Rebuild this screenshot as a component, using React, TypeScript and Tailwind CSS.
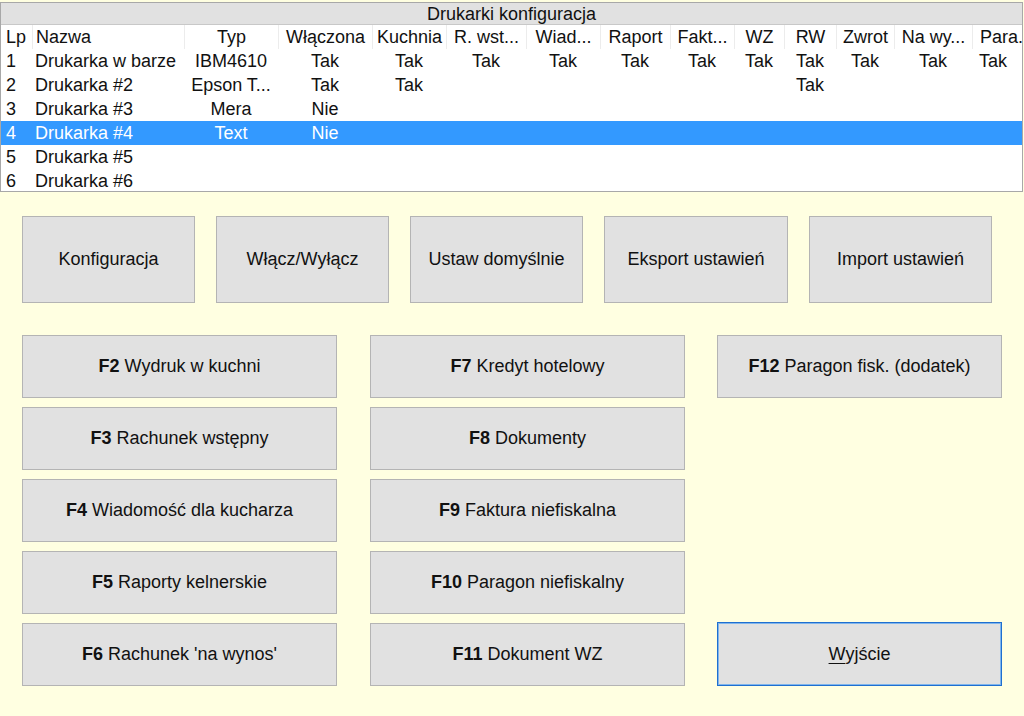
const cols = [31, 152, 94, 94, 74, 80, 74, 70, 64, 50, 52, 58, 78, 51];

const headers = ["Lp", "Nazwa", "Typ", "Włączona", "Kuchnia", "R. wst...", "Wiad...", "Raport", "Fakt...", "WZ", "RW", "Zwrot", "Na wy...", "Para."];

const rows: string[][] = [
  ["1", "Drukarka w barze", "IBM4610", "Tak", "Tak", "Tak", "Tak", "Tak", "Tak", "Tak", "Tak", "Tak", "Tak", "Tak"],
  ["2", "Drukarka #2", "Epson T...", "Tak", "Tak", "", "", "", "", "", "Tak", "", "", ""],
  ["3", "Drukarka #3", "Mera", "Nie", "", "", "", "", "", "", "", "", "", ""],
  ["4", "Drukarka #4", "Text", "Nie", "", "", "", "", "", "", "", "", "", ""],
  ["5", "Drukarka #5", "", "", "", "", "", "", "", "", "", "", "", ""],
  ["6", "Drukarka #6", "", "", "", "", "", "", "", "", "", "", "", ""],
];

function Cell({ i, text, header }: { i: number; text: string; header?: boolean }) {
  const align = i === 0 ? "justify-start pl-[5px]" : i === 1 ? "justify-start pl-[3px]" : i === 13 ? "justify-start pl-[7px]" : "justify-center";
  return (
    <div
      style={{ width: cols[i] }}
      className={`flex items-center shrink-0 overflow-hidden whitespace-nowrap ${align} ${header && i > 0 ? "border-l border-[#ececec]" : ""}`}
    >
      {text}
    </div>
  );
}

function Btn({ k, label, className = "" }: { k?: string; label: string; className?: string }) {
  return (
    <div className={`flex items-center justify-center bg-[#e1e1e1] border border-[#b4b4b4] text-[18px] text-[#111] ${className}`}>
      {k && <span className="font-bold mr-[5px]">{k}</span>}
      {label}
    </div>
  );
}

export default function App() {
  return (
    <div
      className="w-[1024px] h-[716px] bg-[#ffffe1] overflow-hidden text-[18px] text-[#111]"
      style={{ fontFamily: '"Liberation Sans", Arial, sans-serif' }}
    >
      <div className="pt-[2px]">
        <div className="w-[1023px] border border-[#a8a8a8] bg-white">
          <div className="h-[22px] bg-[#e1e1e1] border-b border-[#c8c8c8] flex items-center justify-center leading-none">
            Drukarki konfiguracja
          </div>
          <div className="h-[166px] overflow-hidden">
            <div className="flex h-[24px] leading-none">
              {headers.map((h, i) => (
                <Cell key={i} i={i} text={h} header />
              ))}
            </div>
            {rows.map((r, ri) => (
              <div
                key={ri}
                className={`flex h-[24px] leading-none ${ri === 3 ? "bg-[#3399ff] text-white" : ""}`}
              >
                {r.map((c, i) => (
                  <Cell key={i} i={i} text={c} />
                ))}
              </div>
            ))}
          </div>
        </div>
      </div>

      <div className="flex pl-[22px] pt-[24px] gap-[21px]">
        <Btn label="Konfiguracja" className="w-[173px] h-[87px]" />
        <Btn label="Włącz/Wyłącz" className="w-[173px] h-[87px]" />
        <Btn label="Ustaw domyślnie" className="w-[173px] h-[87px]" />
        <Btn label="Eksport ustawień" className="w-[184px] h-[87px]" />
        <Btn label="Import ustawień" className="w-[183px] h-[87px]" />
      </div>

      <div className="flex pl-[22px] pt-[32px] gap-[33px]">
        <div className="flex flex-col gap-[9px] w-[315px]">
          <Btn k="F2" label="Wydruk w kuchni" className="h-[63px]" />
          <Btn k="F3" label="Rachunek wstępny" className="h-[63px]" />
          <Btn k="F4" label="Wiadomość dla kucharza" className="h-[63px]" />
          <Btn k="F5" label="Raporty kelnerskie" className="h-[63px]" />
          <Btn k="F6" label="Rachunek 'na wynos'" className="h-[63px]" />
        </div>
        <div className="flex flex-col gap-[9px] w-[315px]">
          <Btn k="F7" label="Kredyt hotelowy" className="h-[63px]" />
          <Btn k="F8" label="Dokumenty" className="h-[63px]" />
          <Btn k="F9" label="Faktura niefiskalna" className="h-[63px]" />
          <Btn k="F10" label="Paragon niefiskalny" className="h-[63px]" />
          <Btn k="F11" label="Dokument WZ" className="h-[63px]" />
        </div>
        <div className="flex flex-col justify-between w-[285px] ml-[-1px]">
          <Btn k="F12" label="Paragon fisk. (dodatek)" className="h-[63px]" />
          <div className="h-[64px] flex items-center justify-center bg-[#e1e1e1] border border-[#1f6fd0] shadow-[inset_0_0_0_1px_#7fb5ec] text-[18px]">
            <span>
              <span className="underline underline-offset-[3px]">W</span>yjście
            </span>
          </div>
        </div>
      </div>
    </div>
  );
}
